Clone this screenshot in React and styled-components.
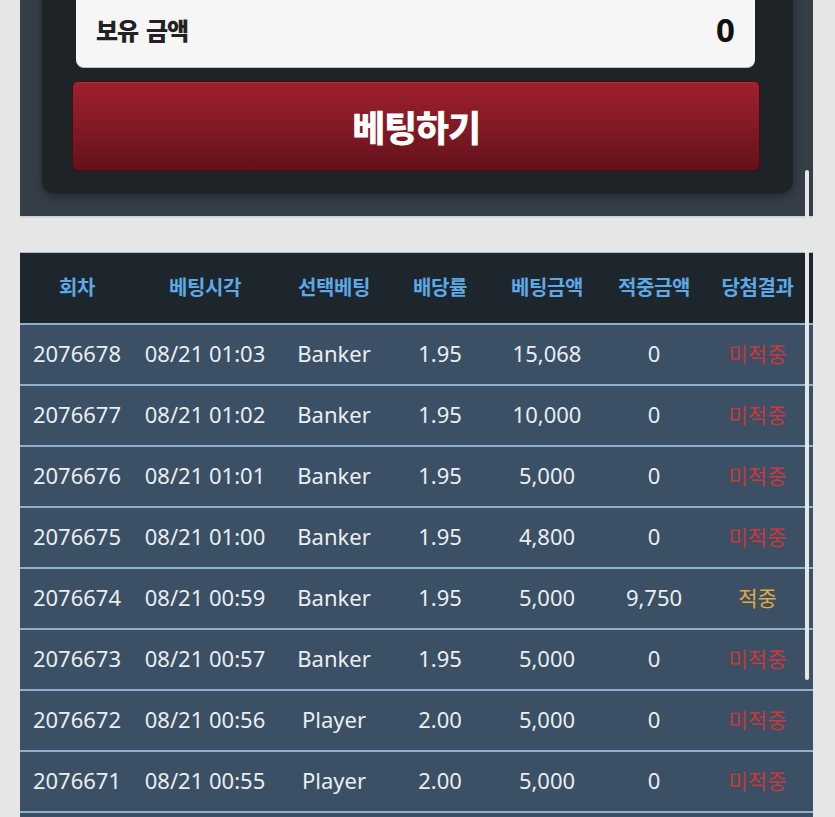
import styled, { createGlobalStyle } from 'styled-components';

const GlobalStyle = createGlobalStyle`
  html, body {
    margin: 0;
    padding: 0;
    background: #e6e6e6;
    overflow: hidden;
  }
  body {
    font-family: "Noto Sans", "Noto Sans CJK KR", sans-serif;
  }
`;

const rows = [
  ['2076678', '08/21 01:03', 'Banker', '1.95', '15,068', '0', false],
  ['2076677', '08/21 01:02', 'Banker', '1.95', '10,000', '0', false],
  ['2076676', '08/21 01:01', 'Banker', '1.95', '5,000', '0', false],
  ['2076675', '08/21 01:00', 'Banker', '1.95', '4,800', '0', false],
  ['2076674', '08/21 00:59', 'Banker', '1.95', '5,000', '9,750', true],
  ['2076673', '08/21 00:57', 'Banker', '1.95', '5,000', '0', false],
  ['2076672', '08/21 00:56', 'Player', '2.00', '5,000', '0', false],
  ['2076671', '08/21 00:55', 'Player', '2.00', '5,000', '0', false],
  ['2076670', '08/21 00:54', 'Player', '2.00', '5,000', '0', false],
];

const columns = [
  ['회차', 114],
  ['베팅시각', 142],
  ['선택베팅', 116],
  ['배당률', 96],
  ['베팅금액', 118],
  ['적중금액', 96],
  ['당첨결과', 111],
];

const App = () => {
  return (
    <>
      <GlobalStyle />
      <Page>
        <BetPanel>
          <BetBox>
            <BalanceField>
              <BalanceLabel>보유 금액</BalanceLabel>
              <BalanceValue>0</BalanceValue>
            </BalanceField>
            <BetButton>베팅하기</BetButton>
          </BetBox>
        </BetPanel>

        <HistoryTable>
          <colgroup>
            {columns.map(([name, w]) => (
              <col key={name} style={{ width: w }} />
            ))}
          </colgroup>
          <thead>
            <tr>
              {columns.map(([name]) => (
                <HeadCell key={name}>{name}</HeadCell>
              ))}
            </tr>
          </thead>
          <tbody>
            {rows.map((r) => (
              <Row key={r[0]}>
                <Cell>{r[0]}</Cell>
                <Cell>{r[1]}</Cell>
                <Cell>{r[2]}</Cell>
                <Cell>{r[3]}</Cell>
                <Cell>{r[4]}</Cell>
                <Cell>{r[5]}</Cell>
                <ResultCell win={r[6] ? 'true' : undefined}>
                  {r[6] ? '적중' : '미적중'}
                </ResultCell>
              </Row>
            ))}
          </tbody>
        </HistoryTable>
      </Page>
      <ScrollThumb />
    </>
  );
};

export default App;

const Page = styled.div`
  margin-top: -12px;
  padding: 0 22px 0 20px;
`;

const BetPanel = styled.div`
  background: #353e47;
  padding: 0 20px 23px 22px;
  border-bottom: 2px solid #cfd3d7;
`;

const BetBox = styled.div`
  background: #1e2328;
  border-radius: 0 0 12px 12px;
  padding: 0 33px 22px 31px;
  box-shadow: 0 4px 8px rgba(0, 0, 0, 0.35);
  display: flex;
  flex-direction: column;
  gap: 13px;
`;

const BalanceField = styled.div`
  height: 80px;
  margin: 0 5px 0 3px;
  background: #f6f6f7;
  border-radius: 0 0 8px 8px;
  border-bottom: 1px solid #b9c3cf;
  display: flex;
  align-items: center;
  justify-content: space-between;
  padding: 4px 20px 0 20px;
  box-sizing: border-box;
`;

const BalanceLabel = styled.span`
  font-family: "Noto Sans CJK KR", sans-serif;
  font-weight: 900;
  font-size: 24px;
  color: #222;
  letter-spacing: -1.2px;
  word-spacing: 4px;
`;

const BalanceValue = styled.span`
  font-family: "Noto Sans", sans-serif;
  font-weight: 700;
  font-size: 33px;
  color: #111;
`;

const BetButton = styled.button`
  height: 90px;
  margin-left: -1px;
  border: 1px solid #4e0a11;
  border-radius: 6px;
  background: linear-gradient(180deg, #a01f2e 0%, #821a26 50%, #64111a 100%);
  color: #fff;
  font-family: "Noto Sans CJK KR", sans-serif;
  font-weight: 900;
  font-size: 36px;
  letter-spacing: -1.2px;
  box-shadow: inset 0 1px 0 rgba(255, 255, 255, 0.08);
  cursor: pointer;
`;

const HistoryTable = styled.table`
  margin-top: 34px;
  width: 793px;
  border-collapse: collapse;
  table-layout: fixed;
  border-top: 1px solid #b3b8bd;
`;

const HeadCell = styled.th`
  height: 66px;
  background: #1d252d;
  color: #5ea8e4;
  font-family: "Noto Sans CJK KR", sans-serif;
  font-weight: 700;
  font-size: 20px;
  letter-spacing: -0.4px;
  text-align: center;
  padding: 0 0 4px;
`;

const Row = styled.tr`
  height: 61px;
  background: #3b5064;
  border-top: 2px solid #8fb1cd;
`;

const Cell = styled.td`
  text-align: center;
  padding: 0 0 3px;
  color: #e9eef3;
  font-size: 22px;
  white-space: nowrap;
`;

const ResultCell = styled(Cell)`
  font-family: "Noto Sans CJK KR", sans-serif;
  font-size: 21px;
  color: ${({ win }) => (win ? '#e3a744' : '#c8383c')};
`;

const ScrollThumb = styled.div`
  position: fixed;
  top: 170px;
  left: 805px;
  width: 4px;
  height: 510px;
  border-radius: 2px;
  background: #e4e6e8;
`;
